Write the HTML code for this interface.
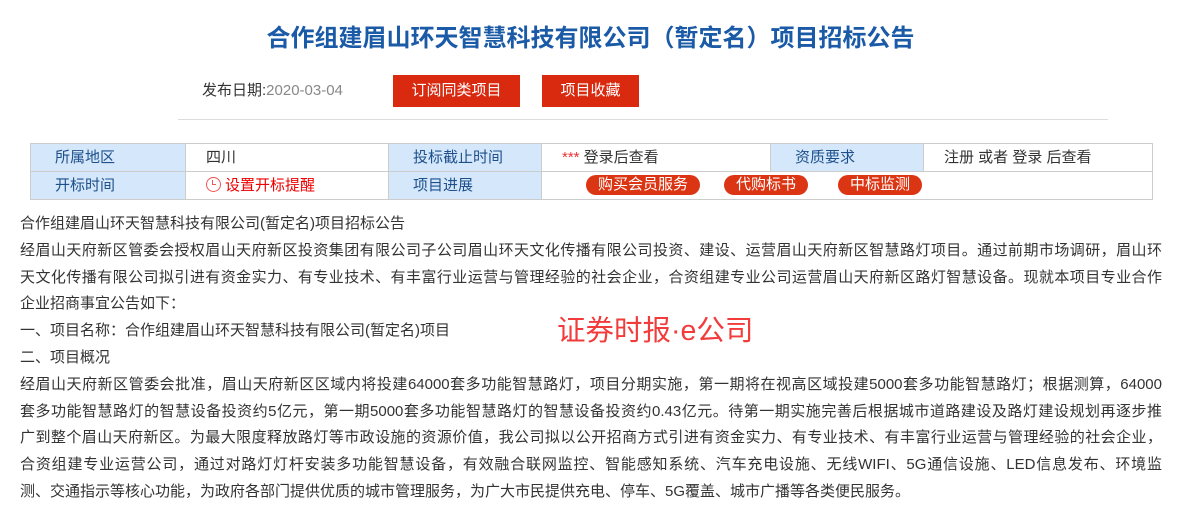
<!DOCTYPE html>
<html><head><meta charset="utf-8"><style>
*{margin:0;padding:0;box-sizing:border-box}
body{width:1181px;height:502px;overflow:hidden;background:#fff;font-family:"Liberation Sans","Noto Sans CJK SC",sans-serif;color:#333;position:relative}
.title{position:absolute;left:0;width:1181px;top:23px;text-align:center;font-size:24px;font-weight:bold;color:#1a5aa6;line-height:32px}
.date{position:absolute;left:202px;top:81px;font-size:15px;color:#333;line-height:20px}
.date span{color:#888}
.btn{position:absolute;top:75px;height:32px;background:#d9290f;color:#fff;font-size:15px;line-height:32px;text-align:center}
.hr{position:absolute;left:178px;width:930px;top:119px;height:1px;background:#ddd}
table{position:absolute;left:30px;top:143px;width:1123px;border-collapse:collapse;font-size:15px}
td{border:1px solid #ccc;height:28px;padding:0 0 0 20px;line-height:26px}
td.h{background:#d5e8fb;color:#1d4f8b;padding-left:24px}
.pill{display:inline-block;background:#dc3513;color:#fff;border-radius:10px;height:20px;line-height:20px;padding:0 12px;font-size:15px;position:absolute;top:175px}
.body{position:absolute;left:20px;top:211px;width:1142px;font-size:15px;line-height:26.8px}
.j{text-align:justify;text-align-last:justify}
.wm{position:absolute;left:557px;top:308px;font-size:28.5px;color:#f23b3b}
</style></head><body>
<div class="title">合作组建眉山环天智慧科技有限公司（暂定名）项目招标公告</div>
<div class="date">发布日期:<span>2020-03-04</span></div>
<div class="btn" style="left:393px;width:127px">订阅同类项目</div>
<div class="btn" style="left:542px;width:97px">项目收藏</div>
<div class="hr"></div>
<table>
<tr><td class="h" style="width:155px">所属地区</td><td style="width:203px">四川</td><td class="h" style="width:153px">投标截止时间</td><td style="width:229px"><span style="color:#e33">***</span> 登录后查看</td><td class="h" style="width:153px">资质要求</td><td>注册 或者 登录 后查看</td></tr>
<tr><td class="h">开标时间</td><td style="color:#e00"><span style="display:inline-block;width:15px;height:15px;border:1.5px solid #e55;border-radius:50%;vertical-align:-2px;position:relative;margin-right:4px"><span style="position:absolute;left:5px;top:2px;width:4px;height:5px;border-left:1.5px solid #e55;border-bottom:1.5px solid #e55"></span></span>设置开标提醒</td><td class="h">项目进展</td><td colspan="3"></td></tr>
</table>
<div class="pill" style="left:586px">购买会员服务</div>
<div class="pill" style="left:724px">代购标书</div>
<div class="pill" style="left:838px">中标监测</div>
<div class="body">
<div>合作组建眉山环天智慧科技有限公司(暂定名)项目招标公告</div>
<div class="j">经眉山天府新区管委会授权眉山天府新区投资集团有限公司子公司眉山环天文化传播有限公司投资、建设、运营眉山天府新区智慧路灯项目。通过前期市场调研，眉山环</div>
<div class="j">天文化传播有限公司拟引进有资金实力、有专业技术、有丰富行业运营与管理经验的社会企业，合资组建专业公司运营眉山天府新区路灯智慧设备。现就本项目专业合作</div>
<div>企业招商事宜公告如下：</div>
<div>一、项目名称：合作组建眉山环天智慧科技有限公司(暂定名)项目</div>
<div>二、项目概况</div>
<div class="j">经眉山天府新区管委会批准，眉山天府新区区域内将投建64000套多功能智慧路灯，项目分期实施，第一期将在视高区域投建5000套多功能智慧路灯；根据测算，64000</div>
<div class="j">套多功能智慧路灯的智慧设备投资约5亿元，第一期5000套多功能智慧路灯的智慧设备投资约0.43亿元。待第一期实施完善后根据城市道路建设及路灯建设规划再逐步推</div>
<div class="j">广到整个眉山天府新区。为最大限度释放路灯等市政设施的资源价值，我公司拟以公开招商方式引进有资金实力、有专业技术、有丰富行业运营与管理经验的社会企业，</div>
<div class="j">合资组建专业运营公司，通过对路灯灯杆安装多功能智慧设备，有效融合联网监控、智能感知系统、汽车充电设施、无线WIFI、5G通信设施、LED信息发布、环境监</div>
<div>测、交通指示等核心功能，为政府各部门提供优质的城市管理服务，为广大市民提供充电、停车、5G覆盖、城市广播等各类便民服务。</div>
</div>
<div class="wm">证券时报·e公司</div>
</body></html>
